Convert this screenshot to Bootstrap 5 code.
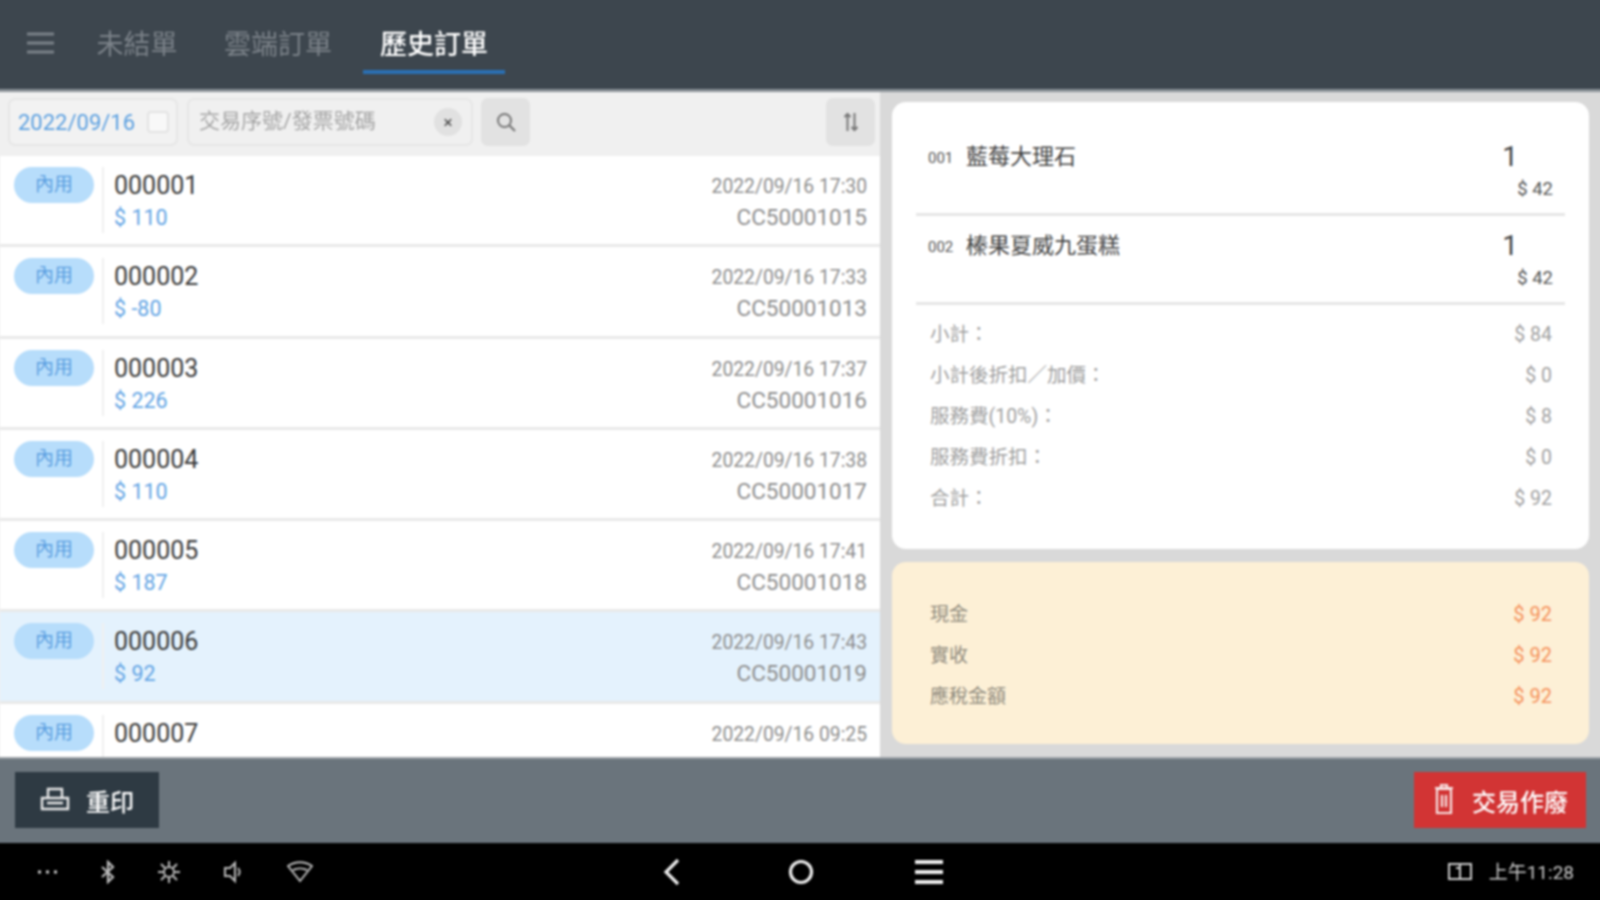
<!DOCTYPE html>
<html lang="zh-Hant">
<head>
<meta charset="utf-8">
<title>歷史訂單</title>
<link href="https://cdn.jsdelivr.net/npm/bootstrap@5.3.0/dist/css/bootstrap.min.css" rel="stylesheet">
<style>
html,body{height:100%;margin:0;overflow:hidden;background:#000}
body{font-family:Roboto,"Noto Sans CJK TC",sans-serif}
.app{width:1608px;height:908px;margin:-4px;filter:blur(.8px)}
.topbar{height:96px;background:#3d464e;border-bottom:3px solid #8b9298;padding:4px 0 0 31px;gap:14px}
.menu-ic{width:27px;height:24px;margin-right:13px;margin-top:-4px}
.tab-x{height:72px;margin-top:16px;width:142px;font-size:27px;color:#7b8289;line-height:56px;text-align:center}
.tab-x.w1{width:112px}
.tab-x.on{color:#fff;font-weight:500;position:relative}
.tab-x.on::after{content:"";position:absolute;left:0;right:0;bottom:15px;height:4px;background:#2a70b4}
.main-area{height:665px}
.left-pane{width:884px;background:#f0f0f0;padding-left:4px}
.tools{height:64px;padding:6px 5px 10px 8px}
.date-box{width:170px;height:48px;border:2px solid #e6e6e6;border-radius:7px;background:#f2f2f2;padding-left:8px;color:#5a9fe0;font-size:22px}
.date-ic{width:22px;height:22px;margin-left:auto;margin-right:7px;background:#f8f8f8;border:2px solid #e3e3e3;border-radius:4px}
.find-box{width:286px;height:48px;margin-left:9px;border:2px solid #e6e6e6;border-radius:7px;background:#f0f0f0;padding:0 9px 0 10px;color:#a5a5a5;font-size:21px}
.clear-x{width:28px;height:28px;border-radius:50%;background:#e1e1e1;margin-left:auto;color:#444;font-size:17px;line-height:28px;text-align:center}
.tool-btn{width:49px;height:48px;background:#e2e2e2;border-radius:7px}
.order-list{flex:1;overflow:hidden;background:#fff}
.order-row{height:91.3px;flex:none;background:#fff;border-bottom:3px solid #e9e9e9;padding:11px 13px 0 14px}
.order-row.sel{background:#e4f2fd}
.tag-x{width:80px;height:36px;border-radius:18px;background:#b7ddfb;color:#5a9ee0;font-size:19px;line-height:36px;text-align:center;flex:none}
.cell-x{margin-left:8px;padding-left:10px;border-left:2px solid #f0f0f0;height:66px}
.num-x{font-size:25px;line-height:30px;color:#3a3a3a;margin-top:4px}
.amt-x{font-size:21.5px;line-height:30px;margin-top:2px;color:#62a4e4}
.when-x{font-size:19.3px;line-height:30px;color:#8d8d8d;margin-top:5px;text-align:right}
.code-x{font-size:22.5px;line-height:30px;color:#8d8d8d;margin-top:0;text-align:right}
.right-pane{width:724px;background:#d9d9d9;padding:10px 15px 13px 12px;gap:13px}
.detail-x{height:447px;background:#fff;border-radius:14px;padding:25px 24px 0 24px}
.item-x{height:89px;border-bottom:3px solid #e6e6e6;padding:13px 12px 0 12px}
.item-x .no{font-size:15px;color:#555;width:38px;line-height:36px}
.item-x .nm{font-size:22px;color:#444;line-height:34px}
.item-x .qty{font-size:28px;color:#444;line-height:34px;margin-right:35px}
.item-x .pr{font-size:18.5px;color:#555;line-height:24px;margin-top:1px}
.sum-x{padding:9px 13px 0 14px}
.sum-row{height:41px;font-size:19.5px;color:#a0a0a0;line-height:41px}
.pay-x{height:182px;background:#fdf0d6;border-radius:14px;padding:32px 37px 0 38px}
.pay-row{height:41px;font-size:19px;color:#8f8a7d;line-height:41px}
.pay-row b{font-weight:400;color:#f5905a;font-size:20px}
.foot-x{height:86px;background:#6a747c;border-top:2px solid #9aa0a5;padding:13px 18px 15px 19px}
.btn-dark-x{width:144px;height:56px;background:#2e3a43;color:#fff;font-size:24px;font-weight:500}
.btn-red-x{width:172px;height:56px;background:#d23434;color:#fff;font-size:24px;font-weight:500}
.btn-dark-x span,.btn-red-x span{padding-top:5px}
.sys-x{height:61px;background:#000;display:grid;grid-template-columns:1fr auto 1fr;color:#ddd;padding:0 30px 4px}
.sys-l{gap:41px;padding-left:10px}
.sys-c{gap:101px}
.sys-r{gap:17px;font-size:19px;color:#ccc;justify-content:flex-end}
.sys-r span{padding-top:4px}
</style>
</head>
<body>
<div class="app d-flex flex-column">
  <div class="topbar d-flex align-items-center">
    <svg class="menu-ic" viewBox="0 0 27 24"><path d="M0 3h27M0 12h27M0 21h27" stroke="#7b8289" stroke-width="3"/></svg>
    <div class="tab-x w1">未結單</div>
    <div class="tab-x">雲端訂單</div>
    <div class="tab-x on">歷史訂單</div>
  </div>
  <div class="main-area d-flex">
    <div class="left-pane d-flex flex-column">
      <div class="tools d-flex align-items-center">
        <div class="date-box d-flex align-items-center">2022/09/16<span class="date-ic"></span></div>
        <div class="find-box d-flex align-items-center">交易序號/發票號碼<span class="clear-x">×</span></div>
        <div class="tool-btn ms-2 d-flex align-items-center justify-content-center">
          <svg width="22" height="22" viewBox="0 0 22 22"><circle cx="9.5" cy="9.5" r="6.5" fill="none" stroke="#777" stroke-width="2"/><path d="M14.5 14.5l5.5 5.5" stroke="#777" stroke-width="2.2"/></svg>
        </div>
        <div class="tool-btn ms-auto d-flex align-items-center justify-content-center">
          <svg width="16" height="22" viewBox="0 0 16 22"><path d="M4.500 20V3M1.500 6l3-3 3 3M11.500 2v17M8.500 16l3 3 3-3" fill="none" stroke="#777" stroke-width="2"/></svg>
        </div>
      </div>
      <div class="order-list d-flex flex-column">
        <div class="order-row d-flex"><div class="tag-x">內用</div><div class="cell-x flex-grow-1 d-flex justify-content-between"><div><div class="num-x">000001</div><div class="amt-x">$ 110</div></div><div><div class="when-x">2022/09/16 17:30</div><div class="code-x">CC50001015</div></div></div></div>
        <div class="order-row d-flex"><div class="tag-x">內用</div><div class="cell-x flex-grow-1 d-flex justify-content-between"><div><div class="num-x">000002</div><div class="amt-x">$ -80</div></div><div><div class="when-x">2022/09/16 17:33</div><div class="code-x">CC50001013</div></div></div></div>
        <div class="order-row d-flex"><div class="tag-x">內用</div><div class="cell-x flex-grow-1 d-flex justify-content-between"><div><div class="num-x">000003</div><div class="amt-x">$ 226</div></div><div><div class="when-x">2022/09/16 17:37</div><div class="code-x">CC50001016</div></div></div></div>
        <div class="order-row d-flex"><div class="tag-x">內用</div><div class="cell-x flex-grow-1 d-flex justify-content-between"><div><div class="num-x">000004</div><div class="amt-x">$ 110</div></div><div><div class="when-x">2022/09/16 17:38</div><div class="code-x">CC50001017</div></div></div></div>
        <div class="order-row d-flex"><div class="tag-x">內用</div><div class="cell-x flex-grow-1 d-flex justify-content-between"><div><div class="num-x">000005</div><div class="amt-x">$ 187</div></div><div><div class="when-x">2022/09/16 17:41</div><div class="code-x">CC50001018</div></div></div></div>
        <div class="order-row sel d-flex"><div class="tag-x">內用</div><div class="cell-x flex-grow-1 d-flex justify-content-between"><div><div class="num-x">000006</div><div class="amt-x">$ 92</div></div><div><div class="when-x">2022/09/16 17:43</div><div class="code-x">CC50001019</div></div></div></div>
        <div class="order-row d-flex"><div class="tag-x">內用</div><div class="cell-x flex-grow-1 d-flex justify-content-between"><div><div class="num-x">000007</div></div><div><div class="when-x">2022/09/16 09:25</div></div></div></div>
      </div>
    </div>
    <div class="right-pane d-flex flex-column">
      <div class="detail-x">
        <div class="item-x">
          <div class="d-flex"><span class="no">001</span><span class="nm">藍莓大理石</span><span class="qty ms-auto">1</span></div>
          <div class="pr text-end">$ 42</div>
        </div>
        <div class="item-x">
          <div class="d-flex"><span class="no">002</span><span class="nm">榛果夏威九蛋糕</span><span class="qty ms-auto">1</span></div>
          <div class="pr text-end">$ 42</div>
        </div>
        <div class="sum-x">
          <div class="sum-row d-flex justify-content-between"><span>小計：</span><span>$ 84</span></div>
          <div class="sum-row d-flex justify-content-between"><span>小計後折扣／加價：</span><span>$ 0</span></div>
          <div class="sum-row d-flex justify-content-between"><span>服務費(10%)：</span><span>$ 8</span></div>
          <div class="sum-row d-flex justify-content-between"><span>服務費折扣：</span><span>$ 0</span></div>
          <div class="sum-row d-flex justify-content-between"><span>合計：</span><span>$ 92</span></div>
        </div>
      </div>
      <div class="pay-x">
        <div class="pay-row d-flex justify-content-between"><span>現金</span><b>$ 92</b></div>
        <div class="pay-row d-flex justify-content-between"><span>實收</span><b>$ 92</b></div>
        <div class="pay-row d-flex justify-content-between"><span>應稅金額</span><b>$ 92</b></div>
      </div>
    </div>
  </div>
  <div class="foot-x d-flex justify-content-between">
    <div class="btn-dark-x d-flex align-items-center justify-content-center gap-3">
      <svg width="30" height="26" viewBox="0 0 30 26"><path d="M8 10V2h14v8M2 11h26v11H2zM7 16h16" fill="none" stroke="#e8e8e8" stroke-width="2.4"/></svg>
      <span>重印</span>
    </div>
    <div class="btn-red-x d-flex align-items-center justify-content-center gap-3">
      <svg width="24" height="32" viewBox="0 0 24 32"><path d="M9 3V1h6v2M3 4h18M5 5h14v24H5zM10 11v12M14 11v12" fill="none" stroke="#f7e4e4" stroke-width="2.200"/></svg>
      <span>交易作廢</span>
    </div>
  </div>
  <div class="sys-x">
    <div class="sys-l d-flex align-items-center">
      <svg width="23" height="6" viewBox="0 0 23 6"><path d="M2 3h3M10 3h3M18 3h3" stroke="#ccc" stroke-width="3"/></svg>
      <svg width="16" height="24" viewBox="0 0 16 24"><path d="M2 7l11 10-5 5V2l5 5L2 17" fill="none" stroke="#bbb" stroke-width="2.200"/></svg>
      <svg width="24" height="24" viewBox="0 0 24 24"><circle cx="12" cy="12" r="5" fill="none" stroke="#bbb" stroke-width="2"/><path d="M12 1v5M12 18v5M1 12h5M18 12h5M4 4l4 4M16 16l4 4M20 4l-4 4M8 16l-4 4" stroke="#bbb" stroke-width="2"/></svg>
      <svg width="24" height="24" viewBox="0 0 24 24"><path d="M3 8h5l5-5v18l-5-5H3z" fill="none" stroke="#bbb" stroke-width="2"/><path d="M16 8c2 2.500 2 5.500 0 8" fill="none" stroke="#bbb" stroke-width="2"/></svg>
      <svg width="26" height="22" viewBox="0 0 26 22"><path d="M1 5c7-5 17-5 24 0L13 20z" fill="none" stroke="#bbb" stroke-width="2"/><path d="M6 9c4-2 10-2 14 0" fill="none" stroke="#bbb" stroke-width="2"/></svg>
    </div>
    <div class="sys-c d-flex align-items-center">
      <svg width="30" height="30" viewBox="0 0 30 30"><path d="M21 3L9 15l12 12" fill="none" stroke="#eee" stroke-width="3.200"/></svg>
      <svg width="26" height="26" viewBox="0 0 26 26"><circle cx="13" cy="13" r="10.500" fill="none" stroke="#eee" stroke-width="3.200"/></svg>
      <svg width="28" height="26" viewBox="0 0 28 26"><path d="M0 3h28M0 13h28M0 23h28" stroke="#eee" stroke-width="4"/></svg>
    </div>
    <div class="sys-r d-flex align-items-center">
      <svg width="24" height="20" viewBox="0 0 24 20"><path d="M1 2h22v15H1zM12 2v15M8 6h4" fill="none" stroke="#ccc" stroke-width="2"/></svg>
      <span>上午11:28</span>
    </div>
  </div>
</div>
</body>
</html>
